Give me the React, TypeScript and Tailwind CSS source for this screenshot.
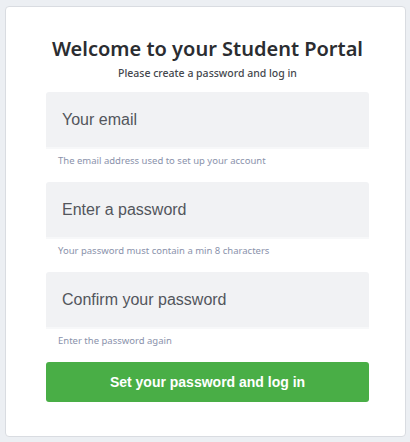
const fields = [
  { placeholder: 'Your email', hint: 'The email address used to set up your account' },
  { placeholder: 'Enter a password', hint: 'Your password must contain a min 8 characters' },
  { placeholder: 'Confirm your password', hint: 'Enter the password again' },
]

export default function App() {
  return (
    <div className="h-[442px] w-[410px] bg-[#eceff3] pt-[6px]">
      <div className="ml-[5px] h-[431px] w-[401px] rounded-[4px] border border-[#d9dce1] bg-white">
        <div className="ml-[40px] w-[323px] pt-[28px]">
          <h1 className="text-center font-['Noto_Sans',sans-serif] text-[20px] font-semibold leading-[28px] text-[#2b2d31]">
            Welcome to your Student Portal
          </h1>
          <p className="mt-[3px] text-center font-['Noto_Sans',sans-serif] text-[10.5px] font-medium leading-[14px] text-[#44474d]">
            Please create a password and log in
          </p>
          <div className="mt-[12px]">
            {fields.map((f) => (
              <div key={f.placeholder} className="mb-[14px]">
                <input
                  type={f.placeholder === 'Your email' ? 'email' : 'password'}
                  placeholder={f.placeholder}
                  className="h-[57px] w-full rounded-t-[3px] border-b-2 border-[#f7f8f9] bg-[#f1f2f4] pl-[16px] font-['Liberation_Sans',sans-serif] text-[16px] text-[#4f5258] outline-none placeholder:text-[#53565c]"
                />
                <p className="mt-[5px] pl-[12px] font-['Noto_Sans',sans-serif] text-[9.5px] leading-[14px] text-[#8a92ab]">
                  {f.hint}
                </p>
              </div>
            ))}
          </div>
          <button
            type="button"
            className="h-[40px] w-full rounded-[3px] bg-[#49ae46] font-['Liberation_Sans',sans-serif] text-[14px] font-bold text-white"
          >
            Set your password and log in
          </button>
        </div>
      </div>
    </div>
  )
}
